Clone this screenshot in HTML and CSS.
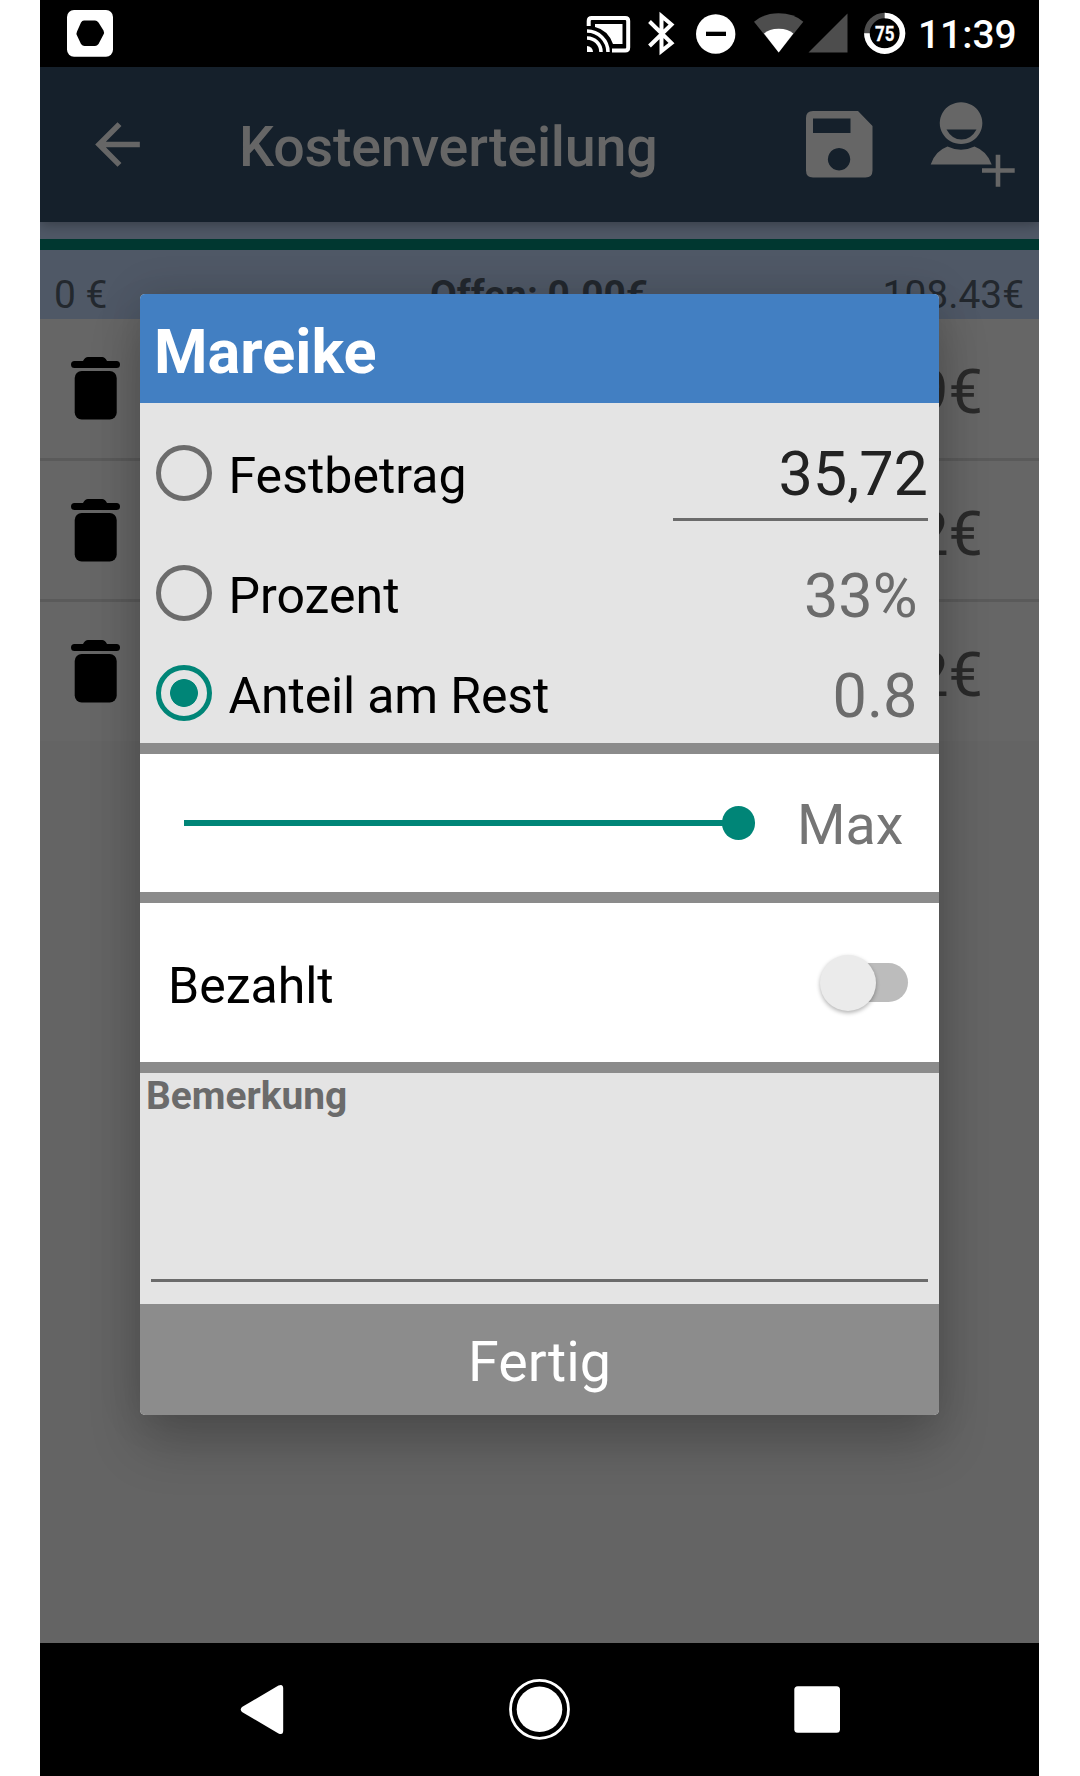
FILE: index.html
```html
<!DOCTYPE html>
<html lang="de">
<head>
<meta charset="utf-8">
<title>Kostenverteilung</title>
<link rel="stylesheet" href="styles.css">
</head>
<body>
<div class="phone">
  <header class="status">
    <svg class="app-badge" width="46" height="47" viewBox="0 0 46 47"><rect width="46" height="46.7" rx="7" fill="#fff"/><path d="M17 10.500h11q2 0 3.500 2l5 8q1 2 0 4l-5 9.500q-1.500 2-3.500 2H17.500q-2 0-3.500-2l-4-8.500q-1-2 0-4l4-9q1-2 3-2z"/></svg>
    <svg class="status-icons" width="330" height="66" viewBox="580 0 330 66">
      <g fill="none" stroke="#fff" stroke-width="4">
        <path d="M588.700 26v-5q0-3 3-3h33.500q3 0 3 3v26.500q0 3-3 3H612"/>
        <path d="M587 31A21 21 0 0 1 608 52M587 38A14 14 0 0 1 601 52" stroke-width="3.500"/>
      </g>
      <path d="M587 46a6 6 0 0 1 6 6h-6z" fill="#fff"/>
      <path d="M595 24h27.500v20H613Q608 30 595 27z" fill="#fff"/>
      <path d="M649.500 21.500l22 21.500-10 8V16l10 8.500-22 21.500" fill="none" stroke="#fff" stroke-width="4"/>
      <circle cx="715.700" cy="34" r="19.700" fill="#fff"/><path d="M706 31.700h20v4.300h-20z"/>
      <path d="M778.700 52.500L754 21.700Q764 13.300 778.700 13.300T803.300 21.700z" fill="#4d4d4d"/>
      <path d="M778.700 52.500L764 33.500Q769 28.700 778.700 28.700T793.300 33.500z" fill="#fff"/>
      <path d="M808.500 52.500L847.500 13.500v39z" fill="#4d4d4d"/>
      <circle cx="884.700" cy="33.300" r="17.800" fill="none" stroke="#4d4d4d" stroke-width="5.600"/>
      <path d="M884.700 15.500a17.800 17.800 0 1 1-17.800 17.800" fill="none" stroke="#fff" stroke-width="5.600"/>
      <text x="884.700" y="41.300" text-anchor="middle" textLength="19.500" lengthAdjust="spacingAndGlyphs" class="battery">75</text>
    </svg>
    <span class="clock">11:39</span>
  </header>
  <div class="appbar">
    <svg class="back" width="67" height="67" viewBox="0 0 24 24"><path fill="#666" d="M20 11H7.830l5.590-5.590L12 4l-8 8 8 8 1.410-1.410L7.830 13H20v-2z"/></svg>
    <h1 class="title">Kostenverteilung</h1>
    <svg class="save" width="67" height="67" viewBox="0 0 67 67"><path fill="#666" fill-rule="evenodd" d="M7 0h45l14.500 15v44.500q0 7-7 7H7q-7 0-7-7V7q0-7 7-7zM7 7.500v14.500h37.500V7.500zM33 37a11.200 11.200 0 1 0 .1 0z"/></svg>
    <svg class="person" width="86" height="86" viewBox="0 0 86 86">
      <path fill="#666" fill-rule="evenodd" d="M31 .2a21.300 20.900 0 1 0 .1 0zM16.500 27.500h30Q41 37.500 31.500 37.500T16.500 27.500z"/>
      <path fill="#666" d="M.7 62.500Q5 49 17.500 44.500 31 51 44.500 44.500 57 49 61.700 62.500z"/>
      <path stroke="#666" stroke-width="4.600" d="M52 68.500H84.700M68 52.800v32"/>
    </svg>
  </div>
  <div class="summary">
    <div class="progress"></div>
    <div class="totals"><span>0 €</span><b>Offen: 0.00€</b><span class="total">108.43€</span></div>
  </div>
  <div class="list">
    <div class="row"><svg class="trash" width="49" height="63" viewBox="0 0 49 63"><path d="M3.500 4H12q2-4 5-4h14q3 0 5 4h9.500a3.500 3.500 0 0 1 0 7h-42a3.500 3.500 0 0 1 0-7z"/><rect x="3.700" y="14" width="42" height="48.600" rx="7"/></svg><span>9€</span></div>
    <div class="row"><svg class="trash" width="49" height="63" viewBox="0 0 49 63"><path d="M3.500 4H12q2-4 5-4h14q3 0 5 4h9.500a3.500 3.500 0 0 1 0 7h-42a3.500 3.500 0 0 1 0-7z"/><rect x="3.700" y="14" width="42" height="48.600" rx="7"/></svg><span>2€</span></div>
    <div class="row"><svg class="trash" width="49" height="63" viewBox="0 0 49 63"><path d="M3.500 4H12q2-4 5-4h14q3 0 5 4h9.500a3.500 3.500 0 0 1 0 7h-42a3.500 3.500 0 0 1 0-7z"/><rect x="3.700" y="14" width="42" height="48.600" rx="7"/></svg><span>2€</span></div>
  </div>
  <nav class="navbar">
    <svg width="999" height="133" viewBox="40 1643 999 133" fill="#fff">
      <path d="M242 1707L278.500 1685.500q4.700-2 4.700 3v42q0 5-4.700 3L242 1712q-2.500-2.500 0-5z"/>
      <circle cx="539.500" cy="1709.300" r="22.800"/><circle cx="539.500" cy="1709.300" r="29" fill="none" stroke="#fff" stroke-width="2.800"/>
      <rect x="794.300" y="1686.300" width="45.700" height="46.400" rx="3.500"/>
    </svg>
  </nav>

  <section class="dialog">
    <h2 class="name">Mareike</h2>
    <div class="options">
      <div class="option tall"><i class="radio"></i><span class="label">Festbetrag</span><span class="amount">35,72</span></div>
      <div class="option"><i class="radio"></i><span class="label">Prozent</span><span class="value">33%</span></div>
      <div class="option"><i class="radio on"></i><span class="label share">Anteil am Rest</span><span class="value">0.8</span></div>
    </div>
    <div class="slider"><i class="track"></i><i class="knob"></i><span class="max">Max</span></div>
    <div class="paid"><span class="label">Bezahlt</span><i class="switch"><i class="thumb"></i></i></div>
    <div class="note"><b>Bemerkung</b></div>
    <div class="done">Fertig</div>
  </section>
</div>
</body>
</html>
```
FILE: styles.css
```css
* { box-sizing: border-box; }
body { margin: 0; background: #fff; font-family: Roboto, "Liberation Sans", sans-serif; }
svg { display: block; flex: none; }
h1, h2 { margin: 0; }
.phone { position: relative; width: 999px; height: 1776px; margin-left: 40px; overflow: hidden; background: #646464; display: flex; flex-direction: column; }

.status { height: 67px; flex: none; background: #000; color: #fff; display: flex; align-items: flex-start; }
.app-badge { margin: 10px 0 0 27px; }
.status-icons { margin-left: 467px; }
.battery { font-size: 19.5px; font-weight: 700; fill: #fff; stroke: #fff; stroke-width: .3px; }
.clock { margin-left: 8px; font-size: 38.9px; font-weight: 500; line-height: 69px; white-space: nowrap; }

.appbar { position: relative; height: 155px; flex: none; background: #15202b; color: #666; display: flex; align-items: flex-start; box-shadow: 0 3px 12px rgba(0,0,0,.3); }
.back { margin: 44px 0 0 44px; }
.title { width: 515px; margin-left: 88px; padding-top: 5px; font-size: 55.6px; font-weight: 500; line-height: 150px; letter-spacing: -.2px; }
.save { margin: 44px 0 0 52px; }
.person { margin: 35px 0 0 57px; }

.summary { height: 97px; flex: none; background: #4f5866; padding-top: 17px; color: #23282e; }
.progress { height: 11px; background: #003730; }
.totals { display: grid; grid-template-columns: 1fr auto 1fr; padding: 22px 15px 0 14px; font-size: 38.9px; line-height: 46px; }
.total { text-align: right; }

.list { background: #666; height: 422px; flex: none; }
.row { height: 141.500px; display: flex; justify-content: space-between; align-items: flex-start; padding: 38px 56px 0 31px; border-bottom: 3px solid #5a5a5a; font-size: 61.200px; line-height: 70px; color: #2a2a2a; }
.row:last-child { border: 0; }
.row .trash { fill: #000; }

.navbar { margin-top: auto; height: 133px; background: #000; }

.dialog { position: absolute; left: 100px; top: 294px; width: 799px; height: 1121px; border-radius: 5px; overflow: hidden; background: #e4e4e4; box-shadow: 0 30px 52px rgba(0,0,0,.2), 0 0 44px rgba(0,0,0,.12); display: flex; flex-direction: column; }
.name { height: 109px; padding: 7px 0 0 14px; background: #427fc2; color: #fff; font-size: 61.200px; font-weight: 700; line-height: 102px; }
.options { height: 351px; flex: none; border-bottom: 11px solid #8b8b8b; }
.option { height: 100px; display: flex; align-items: center; padding-left: 16px; }
.tall { height: 140px; }
.radio { width: 56px; height: 56px; flex: none; border: 5.500px solid #6c6c6c; border-radius: 50%; }
.on { border-color: #008577; background: radial-gradient(circle, #008577 13.500px, transparent 14.300px); }
.label { padding: 5px 0 0 16.500px; font-size: 50px; color: #000; }
.share { letter-spacing: -.15px; }
.value { margin-left: auto; padding: 6px 21.500px 0 0; font-size: 61.200px; color: #6b6b6b; }
.amount { width: 255px; height: 96px; margin: 0 11px 0 auto; border-bottom: 3px solid #6b6b6b; padding-top: 6px; text-align: right; font-size: 61.200px; line-height: 87px; color: #222; }

.slider { height: 149px; flex: none; background: #fff; border-bottom: 11px solid #8b8b8b; display: flex; align-items: center; padding-left: 44px; }
.track { width: 540px; height: 5.500px; background: #008577; }
.knob { width: 33.500px; height: 33.500px; margin-left: -2.500px; border-radius: 50%; background: #008577; }
.max { margin-left: 42px; padding-top: 4px; font-size: 55.600px; color: #757575; }

.paid { height: 170px; flex: none; background: #fff; border-bottom: 11px solid #8b8b8b; display: flex; align-items: center; justify-content: space-between; padding: 0 31px 0 11.500px; }
.paid .label { padding-top: 7px; }
.switch { width: 80px; height: 39px; border-radius: 20px; background: #bcbcbc; display: flex; align-items: center; }
.thumb { width: 56px; height: 56px; margin-left: -8px; border-radius: 50%; background: #ebebeb; box-shadow: 0 2px 4px rgba(0,0,0,.3); }

.note { height: 231px; flex: none; padding: 0 11px 22px 11px; color: #6b6b6b; font-size: 38.900px; line-height: 46px; display: flex; }
.note b { flex: 1; text-indent: -5px; border-bottom: 3px solid #6b6b6b; }
.done { flex: 1; padding-top: 5px; background: #8c8c8c; color: #fff; text-align: center; font-size: 55.600px; line-height: 106px; }
```
